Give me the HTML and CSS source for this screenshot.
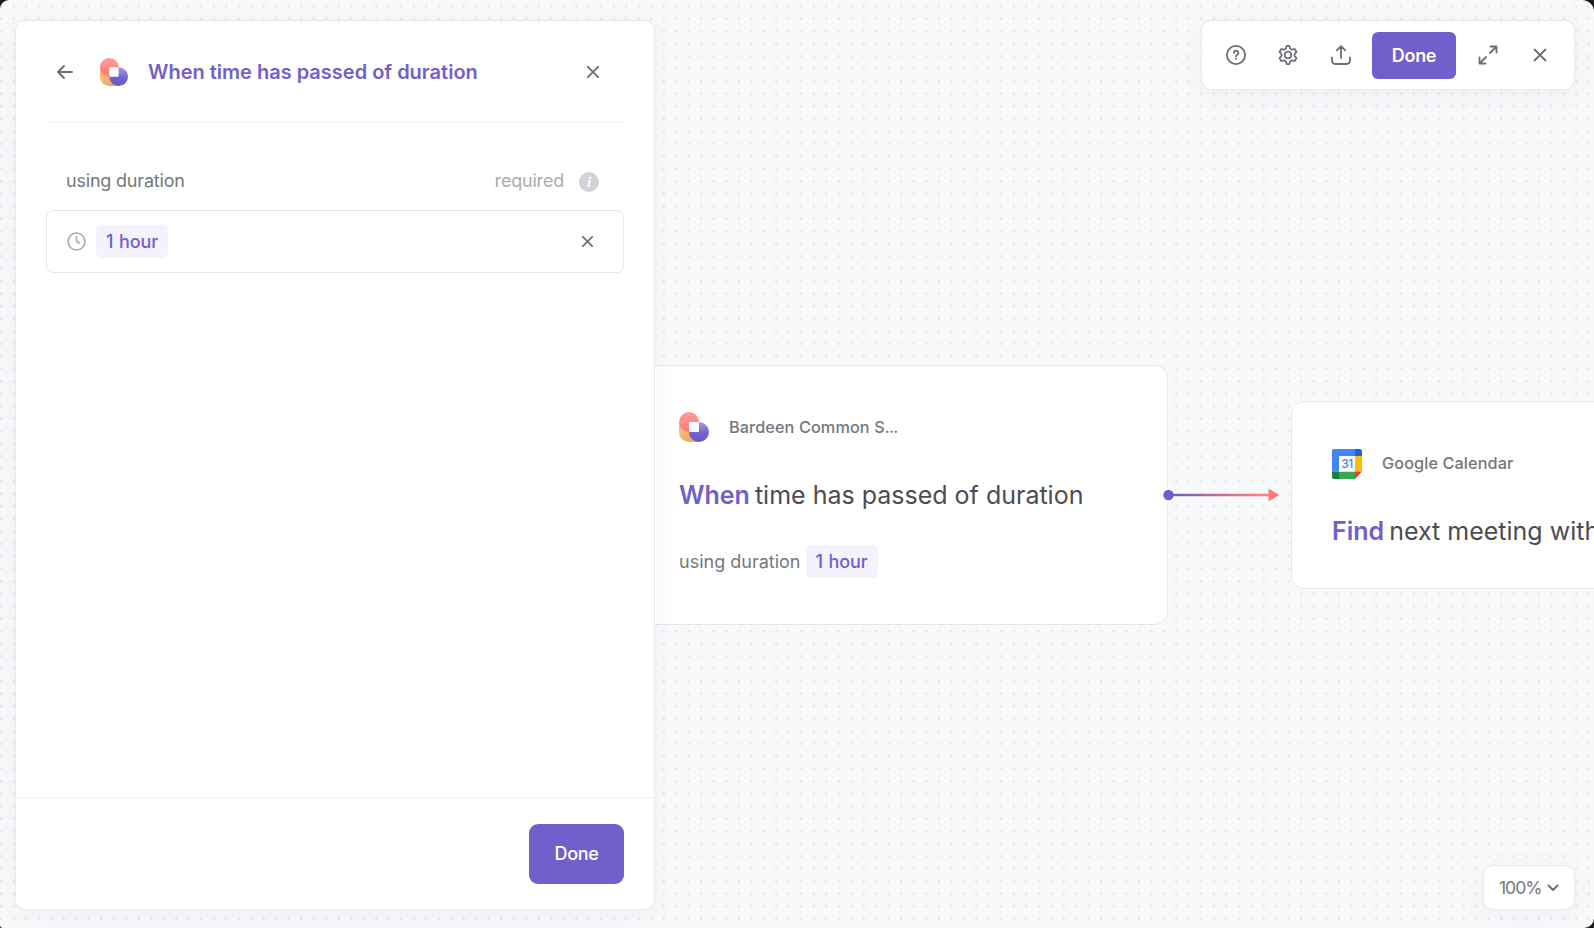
FILE: index.html
```html
<!DOCTYPE html>
<html lang="en">
<head>
  <meta charset="UTF-8" />
  <meta name="viewport" content="width=device-width, initial-scale=1.0" />
  <title>Bardeen Builder</title>
  <link rel="stylesheet" href="styles.css">
</head>
<body>
  <svg width="0" height="0" class="defs">
    <defs>
      <linearGradient id="coral" x1="0" y1="0" x2="0" y2="1">
        <stop offset="0" stop-color="#ff9d9a" /><stop offset="1" stop-color="#ff7975" />
      </linearGradient>
      <linearGradient id="violet" x1="0" y1="0" x2="0" y2="1">
        <stop offset="0" stop-color="#a59ae0" /><stop offset="0.6" stop-color="#7160cb" /><stop offset="1" stop-color="#6b58c9" />
      </linearGradient>
      <linearGradient id="sand" x1="0" y1="0" x2="1" y2="1">
        <stop offset="0" stop-color="#efc88b" /><stop offset="1" stop-color="#f89c4c" />
      </linearGradient>
      <linearGradient id="wire" gradientUnits="userSpaceOnUse" x1="10" y1="0" x2="96" y2="0">
        <stop offset="0" stop-color="#6b5acb" /><stop offset="1" stop-color="#ff7c78" />
      </linearGradient>
      <symbol id="bardeen" viewBox="0 0 30 30">
        <path d="M0 10h20v20H10A10 10 0 0 1 0 20z" fill="url(#sand)" />
        <circle cx="10" cy="10" r="10" fill="url(#coral)" />
        <circle cx="20" cy="20" r="10" fill="url(#violet)" />
        <rect x="10" y="10" width="10" height="10" rx="1.3" fill="#fff" />
      </symbol>
      <symbol id="close" viewBox="0 0 12 12">
        <path d="M.7.7l10.6 10.6M11.3.7L.7 11.3" />
      </symbol>
    </defs>
  </svg>

  <div class="canvas">
    <!-- flow nodes -->
    <section class="node node-when">
      <div class="node-app">
        <svg class="app-icon"><use href="#bardeen" /></svg>
        <span>Bardeen Common S<span class="dots">...</span></span>
      </div>
      <h2><b>When</b> time has passed of duration</h2>
      <p>using duration <span class="chip">1 hour</span></p>
    </section>

    <svg class="wire" viewBox="0 0 120 20">
      <circle cx="8.5" cy="10" r="8" fill="#fff" />
      <path d="M8 10h102" stroke="url(#wire)" stroke-width="2.5" />
      <circle cx="8.5" cy="10" r="5.2" fill="#6f5fcb" />
      <path d="M109.2 4l9.200 5.400q.8.600 0 1.200l-9.200 5.400q-.7.300-.7-.5V4.500q0-.8.7-.5z" fill="#ff7c78" />
    </svg>

    <section class="node node-find">
      <div class="node-app">
        <svg class="app-icon" viewBox="0 0 30 30">
          <path d="M2 0h21v7H7v15.500H0V2Q0 0 2 0z" fill="#4285f4" />
          <path d="M23 0h5q2 0 2 2v5h-7z" fill="#1967d2" />
          <path d="M23 7h7v15.500h-7z" fill="#fbbc04" />
          <path d="M7 22.500h16V30H7z" fill="#34a853" />
          <path d="M0 22.500h7V30H2q-2 0-2-2z" fill="#188038" />
          <path d="M23 22.500h7L23 30z" fill="#f3352c" />
          <path d="M7 7h16v15.500H7z" fill="#fff" />
          <text x="15" y="19" text-anchor="middle" class="cal-day">31</text>
        </svg>
        <span>Google Calendar</span>
      </div>
      <h2><b>Find</b> next meeting with</h2>
    </section>
  </div>

  <aside class="panel">
    <header class="panel-head">
      <svg class="icon back" width="16" height="14" viewBox="0 0 16 14"><path d="M15 7H1.200M7 1L1 7l6 6" /></svg>
      <svg class="head-logo"><use href="#bardeen" /></svg>
      <h1>When time has passed of duration</h1>
      <svg class="icon" width="12" height="12"><use href="#close" /></svg>
    </header>

    <div class="panel-body">
      <div class="label-row">
        <span class="label">using duration</span>
        <span class="required">required</span>
        <span class="info">i</span>
      </div>
      <div class="field">
        <svg class="clock" width="19" height="19" viewBox="0 0 19 19"><circle cx="9.500" cy="9.500" r="8.500" /><path d="M9.500 4v5.500l3.800 1.900" /></svg>
        <span class="chip">1 hour</span>
        <svg class="icon clear" width="11" height="11"><use href="#close" /></svg>
      </div>
    </div>

    <footer class="panel-foot">
      <button class="done">Done</button>
    </footer>
  </aside>

  <nav class="toolbar">
    <svg class="icon" viewBox="0 0 20 20"><circle cx="10" cy="10" r="9.100" /><path d="M7.900 7.900A2.200 2.200 0 1 1 10.800 10Q10 10.400 10 11.500" /><path d="M10 14v.2" /></svg>
    <svg class="icon" viewBox="0 0 20 20">
      <circle cx="10" cy="10" r="3.300" />
      <path d="M8.700.9h2.600l.9 2.900 1.600.9 2.900-.7 1.800 3-2 2.100v1.800l2 2.100-1.800 3-2.900-.7-1.600.9-.9 2.900H8.700l-.9-2.900-1.600-.9-2.900.7-1.800-3 2-2.100V9.100l-2-2.100 1.800-3 2.900.7 1.600-.9z" />
    </svg>
    <svg class="icon share" viewBox="0 0 20 20"><path d="M10 13V1.500M5.800 5.300L10 1.200l4.200 4.100M1 12.500v2.800Q1 19 4.700 19h10.600q3.700 0 3.700-3.700v-2.800" /></svg>
    <button class="done">Done</button>
    <svg class="icon" viewBox="0 0 20 20"><path d="M12.500 1.500h6v6M18.500 1.500l-6.500 6.500M7.500 18.500h-6v-6M1.500 18.500L8 12" /></svg>
    <svg class="icon" viewBox="0 0 20 20"><path d="M4.500 4.500l11 11M15.500 4.500l-11 11" /></svg>
  </nav>

  <button class="zoom"><span>100%</span> <svg class="icon" width="12" height="8" viewBox="0 0 12 8"><path d="M1.500 1.500L6 6l4.500-4.500" /></svg></button>
</body>
</html>
```
FILE: styles.css
```css
:root {
  --violet: #7160cb;
  --text: #4b4d53;
  --muted: #75777c;
  --line: #e6e7ea;
  --shadow: 0 0 0 1px #e9eaed, 0 5px 25px rgba(60, 64, 80, 0.06);
}

* {
  box-sizing: border-box;
}

body {
  margin: 0;
  height: 100vh;
  overflow: hidden;
  background: #1c1c1e;
  font-family: Inter, sans-serif;
  color: var(--text);
}

.defs {
  position: absolute;
}

svg {
  flex: none;
  overflow: visible;
}

h1, h2, p {
  margin: 0;
}

.canvas {
  position: relative;
  height: 100vh;
  overflow: hidden;
  border-radius: 9px 12px 10px 3px;
  background: #f8f9fb radial-gradient(circle, #e7e9ec 1px, transparent 1.8px) -5px 0 / 12.5px 12.5px;
}

.icon {
  fill: none;
  stroke: #6c6e74;
  stroke-width: 1.8;
  stroke-linecap: round;
  stroke-linejoin: round;
}

.chip {
  display: inline-block;
  padding: 0 10px;
  border-radius: 5px;
  background: #f4f2fc;
  color: var(--violet);
  font-size: 18px;
  font-weight: 500;
  letter-spacing: -0.1px;
  word-spacing: 1px;
  line-height: 33px;
}

/* nodes */
.node {
  position: absolute;
  padding: 46px 39px;
  background: #fff;
  border: 1px solid var(--line);
  border-radius: 13px;
}

.node-when {
  left: 639px;
  top: 365px;
  width: 529px;
  height: 260px;
}

.node-find {
  left: 1291px;
  top: 401px;
  width: 529px;
  height: 188px;
  padding-left: 40px;
}

.node-app {
  display: flex;
  align-items: center;
  gap: 20px;
  height: 30px;
  color: var(--muted);
  font-size: 16.25px;
  font-weight: 500;
  letter-spacing: 0.1px;
}

.dots {
  letter-spacing: -0.7px;
}

.app-icon {
  width: 30px;
  height: 30px;
}

.node-find .app-icon {
  margin-top: 2px;
}

.cal-day {
  fill: #4285f4;
  font-size: 12px;
  font-weight: 500;
  letter-spacing: -0.4px;
}

.node h2 {
  margin-top: 33px;
  font-size: 25px;
  font-weight: 400;
  line-height: 40px;
  white-space: nowrap;
}

.node h2 b {
  margin-right: -2px;
  color: var(--violet);
  font-weight: 600;
}

.node p {
  margin-top: 30px;
  color: var(--muted);
  font-size: 18px;
}

.wire {
  position: absolute;
  left: 1160px;
  top: 485px;
  width: 120px;
  height: 20px;
}

/* side panel */
.panel {
  position: absolute;
  left: 16px;
  top: 21px;
  width: 638px;
  height: 888px;
  display: flex;
  flex-direction: column;
  background: #fff;
  border-radius: 9px;
  box-shadow: var(--shadow);
}

.panel-head {
  display: flex;
  align-items: center;
  height: 102px;
  margin: 0 30px;
  padding: 0 25px 0 11px;
  border-bottom: 1px solid #f0f0f2;
}

.head-logo {
  width: 28px;
  height: 28px;
  margin: 0 20px 0 27px;
}

.panel-head h1 {
  flex: 1;
  color: var(--violet);
  font-size: 20px;
  font-weight: 600;
}

.panel-body {
  flex: 1;
  padding: 46px 30px 0;
}

.label-row {
  display: flex;
  align-items: center;
  height: 24px;
  padding: 0 25px 2px 20px;
  font-size: 18px;
  letter-spacing: -0.2px;
}

.label {
  flex: 1;
  color: var(--muted);
}

.required {
  color: #abadb3;
}

.info {
  width: 20px;
  height: 20px;
  margin: 3px 0 0 15px;
  border-radius: 50%;
  background: #d1d3d9;
  color: #fff;
  font: italic bold 15px/20px "Liberation Serif", serif;
  text-align: center;
}

.field {
  display: flex;
  align-items: center;
  height: 63px;
  margin-top: 17px;
  padding: 0 30px 0 20px;
  border: 1px solid var(--line);
  border-radius: 7px;
}

.clock {
  margin-right: 10px;
  fill: none;
  stroke: #a8aab0;
  stroke-width: 1.6;
}

.clear {
  margin-left: auto;
}

.panel-foot {
  display: flex;
  justify-content: flex-end;
  height: 112px;
  padding: 26px 30px;
  border-top: 1px solid #efeff1;
}

button {
  border: none;
  font-family: inherit;
}

.done {
  width: 95px;
  height: 60px;
  padding: 0 0 2px;
  border-radius: 9px;
  background: var(--violet);
  color: #fff;
  font-size: 18px;
  font-weight: 500;
  letter-spacing: -0.3px;
}

/* toolbar */
.toolbar {
  position: absolute;
  left: 1202px;
  top: 21px;
  width: 372px;
  height: 68px;
  display: flex;
  align-items: center;
  justify-content: space-between;
  padding: 0 24px;
  background: #fff;
  border-radius: 9px;
  box-shadow: var(--shadow);
}

.toolbar .icon {
  width: 20px;
  height: 20px;
}

.toolbar .share {
  margin: 0 -1px 0 1px;
}

.toolbar .done {
  width: 84px;
  height: 47px;
  margin: 0 -10px;
  padding: 0;
  border-radius: 6px;
  font-weight: 600;
}

.zoom {
  position: absolute;
  left: 1484px;
  top: 866px;
  width: 90px;
  height: 43px;
  display: flex;
  align-items: center;
  justify-content: space-between;
  padding: 0 15px;
  background: #fff;
  border-radius: 9px;
  box-shadow: var(--shadow);
  color: var(--muted);
  font-size: 17.5px;
  letter-spacing: -1px;
}
```
